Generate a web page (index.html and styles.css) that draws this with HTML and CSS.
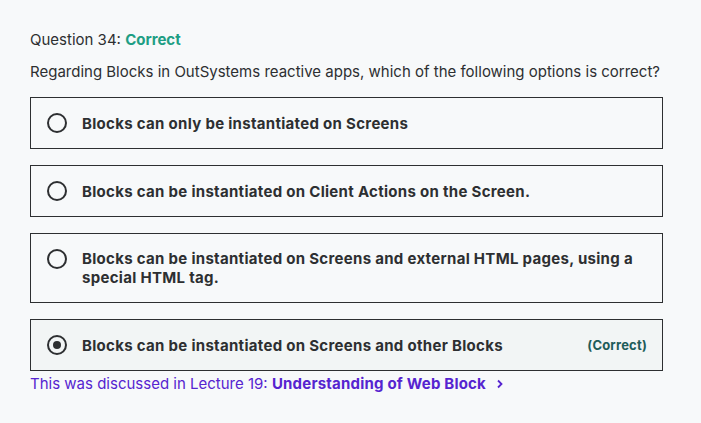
FILE: index.html
```html
<!DOCTYPE html>
<html lang="en">
<head>
<meta charset="utf-8">
<link rel="stylesheet" href="styles.css">
</head>
<body>
<div class="page">
  <div class="q-title">Question 34: <span class="status">Correct</span></div>
  <div class="q-text">Regarding Blocks in OutSystems reactive apps, which of the following options is correct?</div>
  <div class="options">
    <div class="option">
      <span class="radio"></span>
      <span class="label">Blocks can only be instantiated on Screens</span>
    </div>
    <div class="option">
      <span class="radio"></span>
      <span class="label">Blocks can be instantiated on Client Actions on the Screen.</span>
    </div>
    <div class="option">
      <span class="radio"></span>
      <span class="label">Blocks can be instantiated on Screens and external HTML pages, using a special HTML tag.</span>
    </div>
    <div class="option option-correct">
      <span class="radio radio-checked"></span>
      <span class="label">Blocks can be instantiated on Screens and other Blocks</span>
      <span class="tag">(Correct)</span>
    </div>
  </div>
  <div class="ref">This was discussed in Lecture 19: <a class="ref-link" href="#">Understanding of Web Block<svg class="chev" width="10" height="10" viewBox="0 0 10 10"><path d="M3 1.5 L6.5 5 L3 8.5" fill="none" stroke="currentColor" stroke-width="1.8"/></svg></a></div>
</div>
</body>
</html>
```
FILE: styles.css
```css
html, body {
  margin: 0;
  padding: 0;
  background: #f7f9fa;
}
body {
  font-family: Inter, "Noto Sans", sans-serif;
  color: #2d2f31;
}
.page {
  padding: 30px 38px 0 30px;
}
.q-title {
  font-size: 15px;
  line-height: 20px;
}
.status {
  color: #1e9e84;
  font-weight: 700;
}
.q-text {
  font-size: 15px;
  line-height: 20px;
  margin-top: 12px;
  white-space: nowrap;
}
.options {
  display: flex;
  flex-direction: column;
  gap: 16px;
  margin-top: 15px;
}
.option {
  display: flex;
  align-items: center;
  border: 1px solid #2d2f31;
  padding: 15px 15px 15px 16px;
  gap: 15px;
}
.option-correct {
  background: #f2f5f5;
}
.radio {
  flex: none;
  width: 16px;
  height: 16px;
  border: 2px solid #2d2f31;
  border-radius: 50%;
  position: relative;
  align-self: flex-start;
  margin-top: 0;
}
.radio-checked::after {
  content: "";
  position: absolute;
  left: 4px;
  top: 4px;
  width: 8px;
  height: 8px;
  border-radius: 50%;
  background: #2d2f31;
}
.label {
  flex: 1;
  font-size: 15px;
  font-weight: 700;
  line-height: 19px;
  letter-spacing: 0.3px;
}
.tag {
  font-size: 13px;
  font-weight: 700;
  color: #1e5c5a;
  letter-spacing: 0.2px;
}
.ref {
  margin-top: 3px;
  font-size: 15px;
  line-height: 20px;
  color: #5624d0;
}
.ref-link {
  color: #5624d0;
  font-weight: 700;
  text-decoration: none;
  letter-spacing: 0.2px;
}
.chev {
  margin-left: 9px;
}
```
